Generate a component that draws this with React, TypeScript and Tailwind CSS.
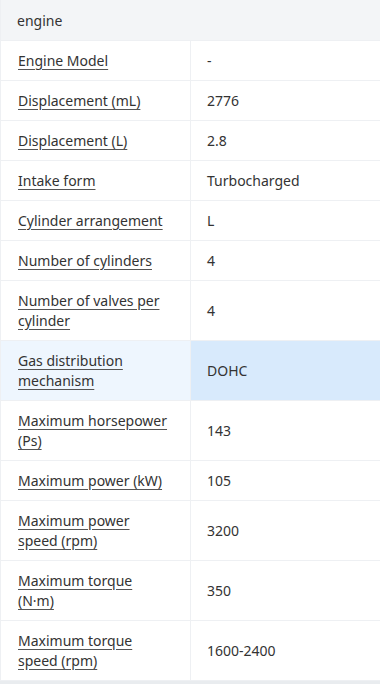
const rows: [string, string][] = [
  ['Engine Model', '-'],
  ['Displacement (mL)', '2776'],
  ['Displacement (L)', '2.8'],
  ['Intake form', 'Turbocharged'],
  ['Cylinder arrangement', 'L'],
  ['Number of cylinders', '4'],
  ['Number of valves per cylinder', '4'],
  ['Gas distribution mechanism', 'DOHC'],
  ['Maximum horsepower (Ps)', '143'],
  ['Maximum power (kW)', '105'],
  ['Maximum power speed (rpm)', '3200'],
  ['Maximum torque (N·m)', '350'],
  ['Maximum torque speed (rpm)', '1600-2400'],
];

export default function App() {
  return (
    <div className="w-[380px] h-[684px] bg-[#e9ecef] overflow-hidden font-['Noto_Sans','Segoe_UI',sans-serif] text-[14px] text-[#333]">
      <div className="bg-white border-l border-[#eef0f3] border-b">
        <div className="h-10 bg-[#f3f5f7] flex items-center pl-4 text-[#333]">engine</div>
        {rows.map(([k, v]) => {
          const hl = k === 'Gas distribution mechanism';
          return (
            <div key={k} className="flex border-t border-[#eef0f3]">
              <div
                className={`w-[190px] shrink-0 py-[9.5px] pl-[17px] pr-[22px] flex items-center border-r border-[#eef0f3] leading-5 ${hl ? 'bg-[#eef6fe]' : ''}`}
              >
                <span className="underline underline-offset-[3px] decoration-[#555]">{k}</span>
              </div>
              <div className={`flex-1 flex items-center pl-4 ${hl ? 'bg-[#d8eafc]' : ''}`}>{v}</div>
            </div>
          );
        })}
      </div>
    </div>
  );
}
